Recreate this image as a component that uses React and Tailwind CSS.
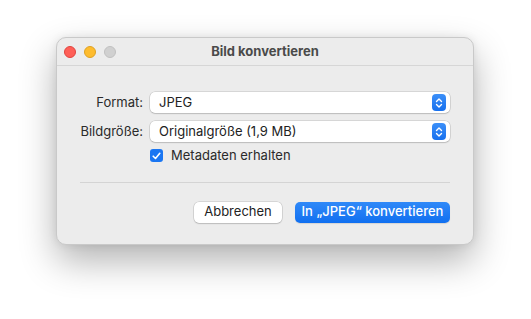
import React from 'react';

function Stepper() {
  return (
    <div className="w-[14px] h-[17px] rounded-[4px] bg-gradient-to-b from-[#3b8ff8] to-[#1670ee] flex items-center justify-center">
      <svg width="8" height="12" viewBox="0 0 8 12" fill="none" stroke="white" strokeWidth="1.4" strokeLinecap="round" strokeLinejoin="round">
        <path d="M1.5 4.5 L4 2 L6.5 4.5" />
        <path d="M1.5 7.5 L4 10 L6.5 7.5" />
      </svg>
    </div>
  );
}

function Select({ value }) {
  return (
    <div className="flex-1 h-[21px] bg-white rounded-[5px] shadow-[0_0_0_0.5px_rgba(0,0,0,0.18),0_1px_1.5px_rgba(0,0,0,0.12)] flex items-center justify-between pl-[9px] pr-[4px]">
      <span className="text-[13px] text-[#222]">{value}</span>
      <Stepper />
    </div>
  );
}

function Row({ label, value }) {
  return (
    <div className="flex items-center">
      <div className="w-[63px] text-right text-[13px] text-[#2a2a2a] whitespace-nowrap">{label}</div>
      <div className="ml-[7px] flex-1 flex">
        <Select value={value} />
      </div>
    </div>
  );
}

export default function App() {
  return (
    <div className="w-[531px] h-[319px] bg-white pt-[37px] pl-[56px] font-['Inter',sans-serif]">
      <div className="w-[418px] h-[208px] bg-[#ececec] rounded-[10px] border border-[#c9c9c9] shadow-[0_16px_36px_rgba(0,0,0,0.3),0_0_8px_rgba(0,0,0,0.08)] flex flex-col overflow-hidden">
        {/* title bar */}
        <div className="relative h-[28px] border-b border-[#d6d6d6] flex items-center">
          <div className="flex gap-[8px] pl-[7px]">
            <div className="w-[12px] h-[12px] rounded-full bg-[#fe5f57] border border-[#e0443e]" />
            <div className="w-[12px] h-[12px] rounded-full bg-[#febc2e] border border-[#dea123]" />
            <div className="w-[12px] h-[12px] rounded-full bg-[#d0d0d0] border border-[#c0c0c0]" />
          </div>
          <div className="absolute inset-0 flex items-center justify-center text-[13px] font-bold text-[#4a4a4a]">
            Bild konvertieren
          </div>
        </div>

        {/* content */}
        <div className="flex-1 px-[23px] pt-[26px] flex flex-col">
          <div className="flex flex-col gap-[8px]">
            <Row label="Format:" value="JPEG" />
            <Row label="Bildgröße:" value="Originalgröße (1,9 MB)" />
          </div>
          <div className="flex items-center mt-[4px] ml-[70px] gap-[8px]">
            <div className="w-[13px] h-[13px] rounded-[3px] bg-[#1a76f2] flex items-center justify-center">
              <svg width="9" height="8" viewBox="0 0 9 8" fill="none" stroke="white" strokeWidth="1.6" strokeLinecap="round" strokeLinejoin="round">
                <path d="M1.2 4.2 L3.5 6.5 L7.8 1.3" />
              </svg>
            </div>
            <span className="text-[13px] text-[#2a2a2a]">Metadaten erhalten</span>
          </div>
          <div className="mt-[16px] h-px bg-[#d4d4d4]" />
          <div className="mt-[19px] flex justify-end gap-[13px]">
            <button className="w-[88px] h-[21px] bg-white rounded-[5px] shadow-[0_0_0_0.5px_rgba(0,0,0,0.18),0_1px_1.5px_rgba(0,0,0,0.12)] text-[13px] text-[#222]">
              Abbrechen
            </button>
            <button className="w-[155px] h-[21px] rounded-[5px] bg-gradient-to-b from-[#2f89f8] to-[#0f6ff0] text-[13px] font-medium text-white shadow-[0_1px_1px_rgba(0,0,0,0.1)]">
              In „JPEG“ konvertieren
            </button>
          </div>
        </div>
      </div>
    </div>
  );
}
